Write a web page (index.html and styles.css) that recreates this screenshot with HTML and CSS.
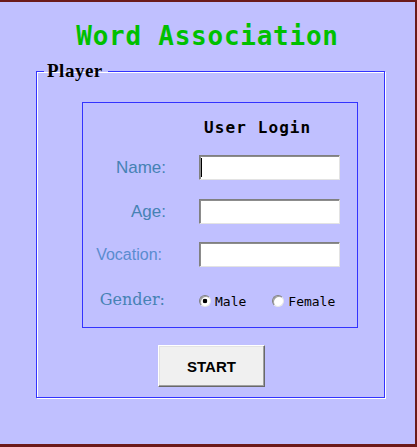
FILE: index.html
```html
<!DOCTYPE html>
<html lang="en">
<head>
<meta charset="utf-8">
<title>Word Association</title>
<link rel="stylesheet" href="styles.css">
</head>
<body>
<h1 class="app-title">Word Association</h1>
<fieldset class="player">
  <legend class="player-legend">Player</legend>
  <div class="login">
    <div class="login-title">User Login</div>
    <div class="row row-name">
      <label class="lbl lbl-name" for="name">Name:</label>
      <span class="input-wrap caret"><input class="txt" id="name" type="text"></span>
    </div>
    <div class="row row-age">
      <label class="lbl lbl-age" for="age">Age:</label>
      <span class="input-wrap"><input class="txt" id="age" type="text"></span>
    </div>
    <div class="row row-voc">
      <label class="lbl lbl-voc" for="voc">Vocation:</label>
      <span class="input-wrap"><input class="txt" id="voc" type="text"></span>
    </div>
    <div class="row row-gender">
      <span class="lbl lbl-gender">Gender:</span>
      <div class="radios">
        <label class="radio-opt"><input class="radio" type="radio" name="g" checked><span>Male</span></label>
        <label class="radio-opt"><input class="radio" type="radio" name="g"><span>Female</span></label>
      </div>
    </div>
  </div>
  <button class="start" type="button">START</button>
</fieldset>
</body>
</html>
```
FILE: styles.css
```css
* { box-sizing: border-box; }
html, body { margin: 0; padding: 0; }
body {
  width: 417px;
  height: 447px;
  overflow: hidden;
  background: #c0c0ff;
  border-top: 2px solid #6b1a1a;
  border-right: 2px solid #6b1a1a;
  border-bottom: 3px solid #6b1a1a;
  display: flex;
  flex-direction: column;
  align-items: flex-start;
}
.app-title {
  margin: 19px 0 0 0;
  align-self: stretch;
  text-align: center;
  font-family: "DejaVu Sans Mono", monospace;
  font-weight: bold;
  font-size: 26px;
  line-height: 30px;
  letter-spacing: 0.75px;
  color: #00c000;
}
.player {
  margin: 10px 0 0 36px;
  padding: 0 0 10px 0;
  width: 349px;
  min-width: 0;
  border: 1px solid #3333ff;
  box-shadow: 1px 1px 0 #ffffff, inset 1px 1px 0 #ffffff;
  display: flex;
  flex-direction: column;
  align-items: flex-start;
}
.player-legend {
  margin-left: 7px;
  padding: 0 5px 0 3px;
  font-family: "Liberation Serif", serif;
  font-weight: bold;
  font-size: 19px;
  line-height: 20px;
  letter-spacing: 0.5px;
  color: #000;
}
.login {
  margin: 21px 0 0 45px;
  width: 276px;
  height: 226px;
  border: 1px solid #3333ff;
  padding-top: 15px;
  display: flex;
  flex-direction: column;
}
.login-title {
  padding-left: 121px;
  height: 20px;
  font-family: "DejaVu Sans Mono", monospace;
  font-weight: bold;
  font-size: 16px;
  line-height: 20px;
  letter-spacing: 1.1px;
  color: #000;
}
.row {
  display: grid;
  grid-template-columns: 83px 141px;
  column-gap: 33px;
  align-items: center;
}
.row-name { margin-top: 17px; height: 25px; }
.row-age { margin-top: 19px; height: 25px; }
.row-voc { margin-top: 18px; height: 25px; }
.row-gender { margin-top: 22px; height: 24px; }
.lbl {
  text-align: right;
  font-family: "Liberation Sans", sans-serif;
  font-size: 17px;
  color: #4682b4;
}
.lbl-voc {
  font-size: 16px;
  color: #5a8ccf;
  padding-right: 4px;
}
.lbl-gender {
  font-family: "DejaVu Serif", serif;
  font-size: 16px;
  padding-right: 1px;
  margin-top: -3px;
}
.input-wrap {
  position: relative;
  display: block;
  height: 25px;
}
.txt {
  display: block;
  width: 141px;
  height: 25px;
  margin: 0;
  padding: 0 3px;
  background: #fff;
  border: 1px solid;
  border-color: #808080 #e3e3e3 #e3e3e3 #808080;
  box-shadow: inset 1px 1px 0 #8c8c8c, inset -1px -1px 0 #ffffff;
  outline: none;
  font-family: "Liberation Sans", sans-serif;
  font-size: 14px;
}
.caret::after {
  content: "";
  position: absolute;
  left: 2px;
  top: 3px;
  width: 1px;
  height: 19px;
  background: #000;
}
.radios {
  display: flex;
  align-items: center;
  gap: 26px;
}
.radio-opt {
  display: flex;
  align-items: center;
  gap: 4px;
  font-family: "DejaVu Sans Mono", monospace;
  font-size: 13px;
  color: #000;
}
.radio {
  appearance: none;
  -webkit-appearance: none;
  margin: 0;
  width: 12px;
  height: 12px;
  border-radius: 50%;
  border: 1px solid;
  border-color: #808080 #e8e8e8 #e8e8e8 #808080;
  background: #fff;
  box-shadow: inset 1px 1px 0 #a0a0a0;
}
.radio:checked {
  background: radial-gradient(circle at 50% 50%, #000 0, #000 2px, #fff 2.6px);
}
.start {
  margin: 17px 0 0 121px;
  width: 107px;
  height: 42px;
  padding: 0;
  background: #f0f0f0;
  border: 1px solid;
  border-color: #ffffff #696969 #696969 #ffffff;
  box-shadow: inset -1px -1px 0 #a0a0a0, inset 1px 1px 0 #e3e3e3;
  font-family: "Liberation Sans", sans-serif;
  font-weight: bold;
  font-size: 15px;
  color: #000;
}
```
